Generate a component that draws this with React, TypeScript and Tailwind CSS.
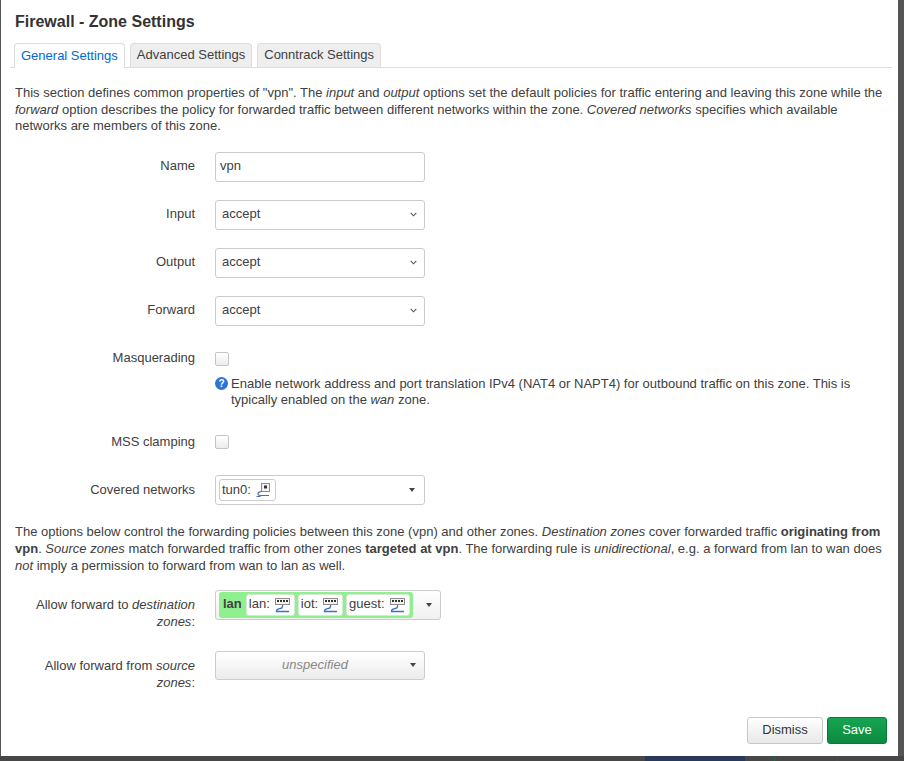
import React from "react";

const FONT = { fontFamily: '"Liberation Sans", Arial, Helvetica, sans-serif' };

function Chevron() {
  return (
    <svg width="7" height="5" viewBox="0 0 7 5" className="shrink-0">
      <polyline points="0.7,0.8 3.5,3.8 6.3,0.8" fill="none" stroke="#555" strokeWidth="1.1" />
    </svg>
  );
}

function Tri() {
  return (
    <svg width="6" height="4" viewBox="0 0 6 4" className="shrink-0">
      <polygon points="0,0 6,0 3,4" fill="#444" />
    </svg>
  );
}

function EthIcon() {
  return (
    <svg width="17" height="16" viewBox="0 0 17 16" className="shrink-0">
      <rect x="1.5" y="1.5" width="14" height="6" fill="#f2f2f2" stroke="#8c8c8c" />
      <rect x="3" y="3" width="2" height="2" fill="#333" />
      <rect x="6" y="3" width="2" height="2" fill="#333" />
      <rect x="9" y="3" width="2" height="2" fill="#333" />
      <rect x="12" y="3" width="2" height="2" fill="#333" />
      <path d="M8.5 8v1.5c0 1.5-1.5 2-3 2.2S2.5 12.5 2.5 14.5H15" fill="none" stroke="#3d6fc2" strokeWidth="1.3" />
    </svg>
  );
}

function TunIcon() {
  return (
    <svg width="16" height="16" viewBox="0 0 16 16" className="shrink-0">
      <rect x="6.5" y="1.5" width="8" height="8" fill="#f2f2f2" stroke="#8c8c8c" />
      <rect x="9" y="3.5" width="3" height="3" fill="#333" />
      <path d="M7 9.5C5 9.5 3 10.5 3 12s1 1.5 2 1.5h9" fill="none" stroke="#3d6fc2" strokeWidth="1.2" />
      <path d="M1.5 14.5h4" fill="none" stroke="#3d6fc2" strokeWidth="1" />
    </svg>
  );
}

function Label({ children }: { children: React.ReactNode }) {
  return <div className="w-[180px] shrink-0 text-right">{children}</div>;
}

function SelectBox({ value }: { value: string }) {
  return (
    <div className="flex h-[30px] w-[210px] items-center justify-between rounded-[3px] border border-[#cccccc] bg-white pl-[6px] pr-[7px] text-[13px] text-[#404040]">
      <span>{value}</span>
      <Chevron />
    </div>
  );
}

function Checkbox() {
  return (
    <div className="h-[14px] w-[14px] rounded-[2px] border border-[#c4c4c4] bg-gradient-to-b from-white to-[#ececec]" />
  );
}

function Row({ label, children, className }: { label: React.ReactNode; children: React.ReactNode; className?: string }) {
  return (
    <div className={"flex h-[30px] items-center gap-[20px] " + (className ?? "")}>
      <Label>{label}</Label>
      {children}
    </div>
  );
}

function Chip({ name, icon }: { name: string; icon: React.ReactNode }) {
  return (
    <div className="flex h-[22px] items-center gap-[4px] rounded-[3px] border border-[#d6e8d6] bg-white pl-[2px] pr-[3px]">
      <span>{name}</span>
      {icon}
    </div>
  );
}

export default function App() {
  return (
    <div className="flex h-[761px] w-[904px] flex-col overflow-hidden bg-[#555555]" style={FONT}>
      <div className="ml-[1px] flex h-[756px] w-[897px] shrink-0 flex-col bg-white pl-[14px] pr-[11px] pt-[12px] text-[13px] leading-[16.5px] text-[#404040]">
        <h2 className="text-[16px] font-bold leading-[19px] text-[#333333]">Firewall - Zone Settings</h2>

        <div className="-mx-[5px] mt-[12px] flex h-[25px] items-end gap-[5px] border-b border-[#dddddd] pl-[4px]">
          <div className="-mb-px flex h-[25px] items-center rounded-t-[4px] border border-b-0 border-[#dddddd] bg-white px-[6px] text-[#0069d6]">
            General Settings
          </div>
          <div className="flex h-[24px] items-center rounded-t-[4px] border border-b-0 border-[#dddddd] bg-[#eeeeee] px-[6px] text-[#404040]">
            Advanced Settings
          </div>
          <div className="flex h-[24px] items-center rounded-t-[4px] border border-b-0 border-[#dddddd] bg-[#eeeeee] px-[6px] text-[#404040]">
            Conntrack Settings
          </div>
        </div>

        <p className="mt-[17px]">
          This section defines common properties of "vpn". The <em>input</em> and <em>output</em> options set the default policies for traffic entering and leaving this zone while the <em>forward</em> option describes the policy for forwarded traffic between different networks within the zone. <em>Covered networks</em> specifies which available networks are members of this zone.
        </p>

        <Row label="Name" className="mt-[17px]">
          <div className="flex h-[30px] w-[210px] items-center rounded-[3px] border border-[#cccccc] bg-white pl-[4px] text-[13px]">
            vpn
          </div>
        </Row>
        <Row label="Input" className="mt-[18px]">
          <SelectBox value="accept" />
        </Row>
        <Row label="Output" className="mt-[18px]">
          <SelectBox value="accept" />
        </Row>
        <Row label="Forward" className="mt-[18px]">
          <SelectBox value="accept" />
        </Row>
        <Row label="Masquerading" className="mt-[18px]">
          <Checkbox />
        </Row>
        <div className="mt-[2px] flex gap-[20px]">
          <div className="w-[180px] shrink-0" />
          <div className="flex flex-1 items-start gap-[3px]">
            <span className="mt-[1.5px] flex h-[13px] w-[13px] shrink-0 items-center justify-center rounded-full bg-[#2a76d2] text-[10px] font-bold leading-none text-white">
              ?
            </span>
            <span>
              Enable network address and port translation IPv4 (NAT4 or NAPT4) for outbound traffic on this zone. This is typically enabled on the <em>wan</em> zone.
            </span>
          </div>
        </div>
        <Row label="MSS clamping" className="mt-[18.5px]">
          <Checkbox />
        </Row>
        <Row label="Covered networks" className="mt-[18px]">
          <div className="flex h-[30px] w-[210px] items-center justify-between rounded-[3px] border border-[#cccccc] bg-white pl-[3px] pr-[9px]">
            <div className="flex h-[22px] items-center gap-[4px] rounded-[3px] border border-[#cccccc] bg-white pl-[2px] pr-[4px]">
              <span>tun0:</span>
              <TunIcon />
            </div>
            <Tri />
          </div>
        </Row>

        <p className="mt-[18px] leading-[17px]">
          The options below control the forwarding policies between this zone (vpn) and other zones. <em>Destination zones</em> cover forwarded traffic <strong>originating from vpn</strong>. <em>Source zones</em> match forwarded traffic from other zones <strong>targeted at vpn</strong>. The forwarding rule is <em>unidirectional</em>, e.g. a forward from lan to wan does <em>not</em> imply a permission to forward from wan to lan as well.
        </p>

        <div className="mt-[15.5px] flex h-[40.5px] items-start gap-[20px]">
          <div className="w-[180px] shrink-0 pt-[6.5px] text-right leading-[17px]">
            Allow forward to <em>destination zones</em>:
          </div>
          <div className="flex h-[30px] w-[226px] items-center justify-between rounded-[3px] border border-[#cccccc] bg-gradient-to-b from-white to-[#f0f0f0] pl-[3px] pr-[8px]">
            <div className="flex h-[26px] items-center gap-[3px] rounded-[3px] bg-[#90f090] pl-[4px] pr-[3px]">
              <span className="mr-[1px] font-bold">lan</span>
              <Chip name="lan:" icon={<EthIcon />} />
              <Chip name="iot:" icon={<EthIcon />} />
              <Chip name="guest:" icon={<EthIcon />} />
            </div>
            <Tri />
          </div>
        </div>

        <div className="mt-[20.5px] flex h-[40.5px] items-start gap-[20px]">
          <div className="w-[180px] shrink-0 pt-[6.5px] text-right leading-[17px]">
            Allow forward from <em>source zones</em>:
          </div>
          <div className="flex h-[29px] w-[210px] items-center rounded-[3px] border border-[#cccccc] bg-gradient-to-b from-white to-[#ececec] pr-[8px]">
            <span className="flex-1 pl-[4px] text-center italic text-[#888888]">unspecified</span>
            <Tri />
          </div>
        </div>

        <div className="mt-[25.5px] flex justify-end gap-[4px]">
          <div className="flex h-[27px] w-[76px] items-center justify-center rounded-[3px] border border-[#c8c8c8] bg-gradient-to-b from-white to-[#e8e8e8] text-[#333333]">
            Dismiss
          </div>
          <div className="flex h-[27px] w-[60px] items-center justify-center rounded-[3px] border border-[#0a7a38] bg-gradient-to-b from-[#16a552] to-[#0b8a3f] text-white">
            Save
          </div>
        </div>
      </div>
      <div className="flex h-[5px] shrink-0 bg-[#474747]">
        <div className="w-[645px] shrink-0" />
        <div className="w-[100px] shrink-0 bg-[#28395a]" />
        <div className="w-[29px] shrink-0" />
        <div className="w-[63px] shrink-0 border-l border-[#2e6a3c]" />
        <div className="w-[60px] shrink-0 border-l border-[#7a3838]" />
      </div>
    </div>
  );
}
